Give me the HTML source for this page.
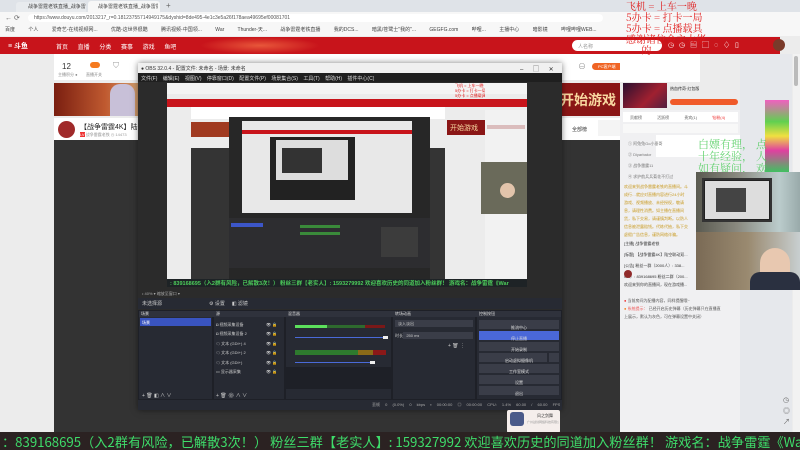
<!DOCTYPE html>
<html><head><meta charset="utf-8"><style>
*{margin:0;padding:0;box-sizing:border-box}
body{width:800px;height:450px;overflow:hidden;position:relative;background:#ececec;font-family:"Liberation Sans","Noto Sans CJK SC",sans-serif;font-size:5px;color:#333}
div{position:absolute}
.t{white-space:nowrap;overflow:hidden}
</style></head><body>
<!-- tabs -->
<div style="left:0;top:0;width:800px;height:12px;background:#dfe3e8"></div>
<div style="left:16px;top:2px;width:70px;height:10px;background:#e8ebee;border-radius:3px 3px 0 0"></div>
<div class="t" style="left:28px;top:3px;width:58px;font-size:5px;color:#444">战争雷霆老铁直播_战争雷霆老铁的...</div>
<div style="left:88px;top:1px;width:72px;height:11px;background:#f7f7f7;border-radius:3px 3px 0 0"></div>
<div class="t" style="left:98px;top:3px;width:60px;font-size:5px;color:#444">战争雷霆老铁直播_战争雷霆老铁 ×</div>
<div class="t" style="left:166px;top:1px;font-size:8px;color:#666">+</div>
<!-- address -->
<div style="left:0;top:12px;width:800px;height:24px;background:#f7f7f7"></div>
<div class="t" style="left:5px;top:14px;font-size:7px;color:#666">← ⟳</div>
<div style="left:28px;top:14px;width:575px;height:8px;background:#fff;border-radius:4px"></div>
<div class="t" style="left:34px;top:15px;font-size:5px;color:#555">https://www.douyu.com/2013217_r=0.18123755714949175&dyshid=8de495-4e1c3e5a26f178aea49695ef00081701</div>
<div class="t" style="left:5px;top:26px;width:610px;font-size:5px;color:#444;word-spacing:12px">百度 个人 爱奇艺-在线视频网... 优酷-这世界很酷 腾讯视频-中国领... War Thunder-天... 战争雷霆老铁直播 我的DCS... 暗黑/苍鹭士"我的"... GEGFG.com 哔哩... 主播中心 暗影镜 哔哩哔哩WEB...</div>
<!-- red nav -->
<div style="left:0;top:37px;width:780px;height:17px;background:#c8141b"></div>
<div style="left:200px;top:37px;width:120px;height:17px;background:radial-gradient(ellipse at center,#e8573a 0%,#c8141b 70%)"></div>
<div class="t" style="left:8px;top:41px;font-size:7px;color:#fff;font-weight:bold">≡ 斗鱼</div>
<div class="t" style="left:56px;top:42px;font-size:6px;color:#fff;word-spacing:8px">首页 直播 分类 赛事 游戏 鱼吧</div>
<div style="left:572px;top:40px;width:90px;height:11px;background:#fff;border-radius:6px"></div>
<div class="t" style="left:578px;top:43px;font-size:5px;color:#999">人名称</div>
<div class="t" style="left:668px;top:40px;font-size:7px;color:#fff;word-spacing:3px">◷ ◷ ▤ ▢ ◌ ♢ ▯</div>
<div style="left:773px;top:39px;width:12px;height:12px;border-radius:6px;background:#7a3a2a"></div>
<!-- content left region -->
<div style="left:0;top:54px;width:54px;height:380px;background:#ececec"></div>
<div style="left:54px;top:54px;width:566px;height:26px;background:#fff"></div>
<div class="t" style="left:62px;top:62px;font-size:8px;color:#333">12</div>
<div class="t" style="left:58px;top:72px;font-size:4px;color:#888">主播积分 ●</div>
<div style="left:90px;top:62px;width:10px;height:6px;background:#f57a20;border-radius:3px"></div>
<div class="t" style="left:86px;top:72px;font-size:4px;color:#888">直播开关</div>
<div class="t" style="left:113px;top:61px;font-size:8px;color:#999">⛉</div>
<div class="t" style="left:578px;top:61px;font-size:8px;color:#999">⊖</div>
<div style="left:592px;top:63px;width:35px;height:7px;background:#f06424;border-radius:4px"></div>
<div class="t" style="left:598px;top:64px;font-size:4px;color:#fff">PC客户端</div>
<!-- banner -->
<div style="left:54px;top:83px;width:86px;height:33px;background:linear-gradient(90deg,#7a1e10,#c05a30 60%,#d0a070)"></div>
<div style="left:110px;top:84px;width:25px;height:32px;background:#c8c0d8;border-radius:10px 10px 0 0"></div>
<div style="left:540px;top:83px;width:80px;height:33px;background:#8a1616"></div>
<div class="t" style="left:560px;top:90px;font-size:14px;color:#f8d8a0;font-weight:bold">开始游戏</div>
<div style="left:54px;top:118px;width:566px;height:22px;background:#fff"></div>
<div style="left:58px;top:121px;width:17px;height:17px;border-radius:9px;background:#a02a2a"></div>
<div class="t" style="left:80px;top:122px;font-size:7px;color:#222">【战争雷霆4K】陆空联...</div>
<div class="t" style="left:80px;top:132px;font-size:4px;color:#999"><span style="background:#e33;color:#fff">LV</span> 战争雷霆老铁 ◷ 14473</div>
<div class="t" style="left:572px;top:126px;font-size:5px;color:#333">全部榜</div>
<div style="left:598px;top:120px;width:22px;height:16px;background:#f4f4f4"></div>
<div style="left:54px;top:140px;width:566px;height:292px;background:#333"></div>
<!-- ad right -->
<div style="left:620px;top:54px;width:80px;height:28px;background:#fff"></div>
<div style="left:623px;top:83px;width:44px;height:25px;background:linear-gradient(135deg,#2a1030,#a02030 60%,#502040)"></div>
<div class="t" style="left:670px;top:86px;font-size:4px;color:#222">热血传奇·红包版</div>
<div style="left:670px;top:99px;width:68px;height:6px;background:#f05a28;border-radius:3px"></div>
<!-- chat panel -->
<div style="left:620px;top:110px;width:120px;height:322px;background:#f0f0f2"></div>
<div style="left:623px;top:112px;width:115px;height:10px;background:#fff"></div>
<div class="t" style="left:630px;top:115px;font-size:4px;color:#666;word-spacing:14px">贡献榜 活跃榜 贵宾(1) <span style="color:#e33">钻粉(4)</span></div>
<div style="left:623px;top:124px;width:115px;height:9px;background:#f8f8f8"></div>
<div style="left:656px;top:135px;width:84px;height:22px;background:#fff"></div>
<div class="t" style="left:628px;top:138px;font-size:4px;color:#777;line-height:11px">① 阿兔兔Go小垂哥<br>② Diyarbakır<br>③ 战争雷霆11<br>④ 求护航兵兵菊花不打过</div>
<div class="t" style="left:624px;top:183px;width:72px;font-size:4px;color:#c99a20;line-height:8px">欢迎来到战争雷霆老铁的直播间。斗<br>成行…就应对直播内容进行24小时<br>游戏、视频播放、未经授权，敬请<br>息，请理性消费。如主播在直播间<br>货，私下交易，请谨慎判断。以防人<br>信息被泄露赔钱。代练代抽，私下交<br>虚假广告信息，谨防网络诈骗。</div>
<div class="t" style="left:624px;top:238px;width:72px;font-size:4px;color:#333;line-height:11px">[主播] 战争雷霆老铁<br>[标题] 【战争雷霆4K】陆空联动双...<br>[公告] 粉丝一群（2000人）: 338...<br>0人）: 839168695 粉丝二群（200...</div>
<div style="left:624px;top:270px;width:8px;height:8px;border-radius:4px;background:#902a2a"></div>
<div class="t" style="left:624px;top:282px;width:72px;font-size:4px;color:#444">欢迎来到你的直播间，现在游戏播...</div>
<div class="t" style="left:624px;top:297px;width:116px;font-size:4px;color:#555;line-height:8px"><span style="color:#e33">●</span> 当前房间为配播内容，同样提醒哦~<br><span style="color:#f08020">●</span> <span style="color:#e55">系统提示：</span> 已经开启历史弹幕（历史弹幕只在直播直<br>上展示，默认为灰色，可在弹幕设置中关闭）</div>
<div style="left:740px;top:54px;width:52px;height:378px;background:#e6e8ec"></div>
<div style="left:765px;top:100px;width:24px;height:72px;background:linear-gradient(180deg,#f060c0,#60d050 30%,#f0e040 50%,#e040a0 70%,#40c060)"></div>
<div style="left:793px;top:54px;width:7px;height:378px;background:#f2f2f2"></div>
<div style="left:794px;top:56px;width:4px;height:30px;background:#bbb;border-radius:2px"></div>
<div class="t" style="left:783px;top:395px;font-size:7px;color:#666;line-height:11px">◷<br>◎<br>↗</div>
<!-- green overlay text -->
<div class="t" style="left:698px;top:138px;width:102px;font-size:11px;color:#4ccc5a;line-height:12px;font-family:'Noto Serif CJK SC',serif;opacity:.85">白嫖有理， 点<br>十年经验， 人<br>如有疑问， 欢</div>
<!-- webcam -->
<div style="left:696px;top:172px;width:104px;height:60px;background:linear-gradient(90deg,#5a5a50,#8a8a80 40%,#bcc 80%,#9aa)"></div>
<div style="left:702px;top:178px;width:70px;height:44px;background:#222;border:2px solid #333"></div>
<div style="left:705px;top:181px;width:64px;height:38px;background:#ddd"></div>
<div style="left:716px;top:188px;width:30px;height:24px;background:#444"></div>
<div style="left:696px;top:232px;width:104px;height:58px;background:linear-gradient(90deg,#7a6a55,#9a8a70 50%,#c8cfd0)"></div>
<div style="left:760px;top:248px;width:30px;height:30px;border-radius:15px 15px 0 0;background:#e8c8b0"></div>
<div style="left:750px;top:272px;width:50px;height:18px;background:#2a3040;border-radius:10px 10px 0 0"></div>
<!-- red top-right overlay -->
<div class="t" style="left:626px;top:0px;width:80px;font-size:10px;color:#e01818;line-height:11px;font-family:'Noto Serif CJK SC',serif">飞机 = 上车一晚<br>5办卡 = 打卡一局<br>5办卡 = 点播载具<br>感谢诸位金主大佬<br>&nbsp;&nbsp;&nbsp;&nbsp;&nbsp;&nbsp;的</div>
<!-- OBS window -->
<div style="left:138px;top:63px;width:424px;height:347px;background:#2b2b2b;box-shadow:0 0 6px rgba(0,0,0,.5)"></div>
<div style="left:138px;top:63px;width:424px;height:10px;background:#f0f0f0"></div>
<div class="t" style="left:141px;top:65px;font-size:5px;color:#333">● OBS 32.0.4 - 配置文件: 未命名 - 场景: 未命名</div>
<div class="t" style="left:520px;top:64px;font-size:6px;color:#333;word-spacing:8px">– ▢ ✕</div>
<div style="left:138px;top:73px;width:424px;height:9px;background:#1f1f1f"></div>
<div class="t" style="left:141px;top:75px;font-size:5px;color:#ddd;word-spacing:4px">文件(F) 编辑(E) 视图(V) 停靠窗口(D) 配置文件(P) 场景集合(S) 工具(T) 帮助(H) 插件中心(C)</div>
<!-- nested preview -->
<div style="left:167px;top:83px;width:360px;height:197px;background:#ececec"></div>
<div style="left:167px;top:83px;width:360px;height:11px;background:#f4f4f4"></div>
<div style="left:167px;top:99px;width:360px;height:8px;background:#c8141b"></div>
<div class="t" style="left:455px;top:83px;width:30px;color:#e01818;font-size:4px;line-height:5px">飞机 = 上车一晚<br>5办卡 = 打卡一局<br>5办卡 = 点播载具</div>
<div style="left:191px;top:107px;width:254px;height:12px;background:#fff"></div>
<div style="left:191px;top:122px;width:40px;height:15px;background:#a03a20"></div>
<div style="left:447px;top:120px;width:38px;height:15px;background:#8a1616"></div>
<div class="t" style="left:450px;top:123px;font-size:7px;color:#f8d8a0">开始游戏</div>
<div style="left:191px;top:148px;width:254px;height:132px;background:#343434"></div>
<div style="left:485px;top:110px;width:42px;height:170px;background:#f2f2f2"></div>
<div style="left:487px;top:125px;width:38px;height:4px;background:#c99;opacity:.6"></div>
<div style="left:481px;top:162px;width:46px;height:52px;background:#6a6a5a"></div>
<div style="left:500px;top:183px;width:15px;height:15px;border-radius:8px;background:#e2c4ab"></div>
<div style="left:229px;top:117px;width:201px;height:162px;background:#272727"></div>
<div style="left:242px;top:121px;width:170px;height:92px;background:#e8e8e8"></div>
<div style="left:242px;top:130px;width:170px;height:4px;background:#c8141b"></div>
<div style="left:270px;top:137px;width:85px;height:63px;background:#222"></div>
<div style="left:276px;top:140px;width:72px;height:40px;background:#ddd"></div>
<div style="left:282px;top:148px;width:40px;height:25px;background:#333"></div>
<div style="left:229px;top:218px;width:201px;height:50px;background:#2d2d30"></div>
<div style="left:231px;top:223px;width:32px;height:4px;background:#3c56c8"></div>
<div style="left:300px;top:225px;width:40px;height:3px;background:#3a8a3a"></div>
<div style="left:300px;top:232px;width:40px;height:3px;background:#3a8a3a"></div>
<div style="left:381px;top:227px;width:37px;height:30px;background:#3c3c3c"></div>
<div style="left:167px;top:279px;width:360px;height:8px;background:#1e2326"></div>
<div class="t" style="left:170px;top:279px;width:357px;font-size:5.5px;color:#4ccc5a;font-weight:bold">: 839168695（入2群有风险，已解散3次！） 粉丝三群【老实人】: 1593279992 欢迎喜欢历史的同道加入粉丝群！ 游戏名：战争雷霆《War</div>
<!-- OBS docks -->
<div style="left:138px;top:290px;width:424px;height:9px;background:#2b2b2b"></div>
<div class="t" style="left:142px;top:291px;font-size:4px;color:#aaa">• 40% ▾ 缩放至窗口 ▾</div>
<div style="left:138px;top:298px;width:424px;height:11px;background:#272a33"></div>
<div class="t" style="left:142px;top:300px;font-size:5px;color:#ccc">未选择源</div>
<div class="t" style="left:209px;top:300px;font-size:5px;color:#ccc">⚙ 设置 &nbsp;&nbsp;&nbsp; ◧ 滤镜</div>
<div style="left:138px;top:310px;width:424px;height:92px;background:#1e2027"></div>
<div style="left:139px;top:311px;width:73px;height:88px;background:#272a33"></div>
<div style="left:214px;top:311px;width:70px;height:88px;background:#272a33"></div>
<div style="left:286px;top:311px;width:105px;height:88px;background:#272a33"></div>
<div style="left:393px;top:311px;width:82px;height:88px;background:#272a33"></div>
<div style="left:477px;top:311px;width:84px;height:88px;background:#272a33"></div>
<div style="left:139px;top:311px;width:422px;height:6px;background:#2f323c"></div>
<div class="t" style="left:141px;top:311px;font-size:4px;color:#ddd">场景</div>
<div class="t" style="left:216px;top:311px;font-size:4px;color:#ddd">源</div>
<div class="t" style="left:288px;top:311px;font-size:4px;color:#ddd">混音器</div>
<div class="t" style="left:395px;top:311px;font-size:4px;color:#ddd">转场动画</div>
<div class="t" style="left:479px;top:311px;font-size:4px;color:#ddd">控制按钮</div>
<div style="left:140px;top:318px;width:71px;height:8px;background:#3954c0"></div>
<div class="t" style="left:142px;top:320px;font-size:4px;color:#fff">场景</div>
<div class="t" style="left:216px;top:320px;font-size:4px;color:#ccc;line-height:9.4px">◘ 视频采集设备<br>◘ 视频采集设备 2<br>☁ 文本 (GDI+) 4<br>☁ 文本 (GDI+) 2<br>☁ 文本 (GDI+)<br>▭ 显示器采集</div>
<div class="t" style="left:266px;top:320px;font-size:4px;color:#ddd;line-height:9.4px">👁 🔒<br>👁 🔒<br>👁 🔒<br>👁 🔒<br>👁 🔒<br>👁 🔒</div>
<div style="left:295px;top:325px;width:90px;height:3px;background:#2e6a2e"></div>
<div style="left:295px;top:325px;width:32px;height:3px;background:#5ce05c"></div>
<div style="left:365px;top:325px;width:20px;height:3px;background:#7a1818"></div>
<div style="left:295px;top:337px;width:90px;height:1px;background:#4a6ad8"></div>
<div style="left:383px;top:336px;width:5px;height:3px;background:#eee"></div>
<div style="left:295px;top:350px;width:90px;height:5px;background:#2e7a2e"></div>
<div style="left:358px;top:350px;width:15px;height:5px;background:#8a6a18"></div>
<div style="left:373px;top:350px;width:13px;height:5px;background:#8a1818"></div>
<div style="left:295px;top:362px;width:78px;height:1px;background:#4a6ad8"></div>
<div style="left:370px;top:361px;width:5px;height:3px;background:#eee"></div>
<div style="left:286px;top:367px;width:105px;height:22px;background:#1e2027"></div>
<div style="left:395px;top:320px;width:78px;height:7px;background:#3a3d48"></div>
<div class="t" style="left:398px;top:321px;font-size:4px;color:#ccc">淡入淡出</div>
<div style="left:403px;top:332px;width:70px;height:7px;background:#3a3d48"></div>
<div class="t" style="left:395px;top:333px;font-size:4px;color:#ccc">时长 &nbsp;&nbsp;250 ms</div>
<div class="t" style="left:448px;top:343px;font-size:5px;color:#ccc">+ 🗑 ⋮</div>
<div style="left:479px;top:320px;width:80px;height:9px;background:#3a3d48"></div>
<div style="left:479px;top:331px;width:80px;height:9px;background:#4a68d8"></div>
<div style="left:479px;top:342px;width:80px;height:9px;background:#3a3d48"></div>
<div style="left:479px;top:353px;width:68px;height:9px;background:#3a3d48"></div>
<div style="left:549px;top:353px;width:10px;height:9px;background:#3a3d48"></div>
<div style="left:479px;top:364px;width:80px;height:9px;background:#3a3d48"></div>
<div style="left:479px;top:375px;width:80px;height:9px;background:#3a3d48"></div>
<div style="left:479px;top:386px;width:80px;height:9px;background:#3a3d48"></div>
<div class="t" style="left:479px;top:322px;width:80px;font-size:4px;color:#ddd;text-align:center;line-height:11px">推流中心<br>停止直播<br>开始录制<br>启动虚拟摄像机<br>工作室模式<br>设置<br>退出</div>
<div class="t" style="left:142px;top:392px;font-size:5px;color:#ccc">+ 🗑 ◧ ∧ ∨</div>
<div class="t" style="left:216px;top:392px;font-size:5px;color:#ccc">+ 🗑 ⚙ ∧ ∨</div>
<div style="left:138px;top:400px;width:424px;height:10px;background:#272a33"></div>
<div class="t" style="left:372px;top:402px;width:188px;font-size:4px;color:#aaa;word-spacing:4px">丢帧 0 (0.0%) 0 kbps ▪ 00:00:00 ◎ 00:00:00 CPU: 1.4% 60.00 / 60.00 FPS</div>
<!-- white popup -->
<div style="left:507px;top:410px;width:53px;height:23px;background:#f5eeec;border-radius:2px"></div>
<div style="left:510px;top:412px;width:14px;height:14px;background:#4a5a8a;border-radius:3px"></div>
<div class="t" style="left:537px;top:413px;font-size:4px;color:#333">风之剑舞</div>
<div class="t" style="left:527px;top:420px;width:32px;font-size:3px;color:#999">广州战剑网络科技有限公司</div>
<!-- bottom ticker -->
<div style="left:0;top:432px;width:800px;height:18px;background:#2b2222"></div>
<div class="t" style="left:2px;top:434px;width:798px;font-size:13.2px;color:#3edc6a;line-height:15px;font-family:'Noto Sans CJK SC','Liberation Sans',sans-serif">：839168695（入2群有风险，已解散3次！） 粉丝三群【老实人】: 159327992 欢迎喜欢历史的同道加入粉丝群！ 游戏名：战争雷霆《War</div>
</body></html>
